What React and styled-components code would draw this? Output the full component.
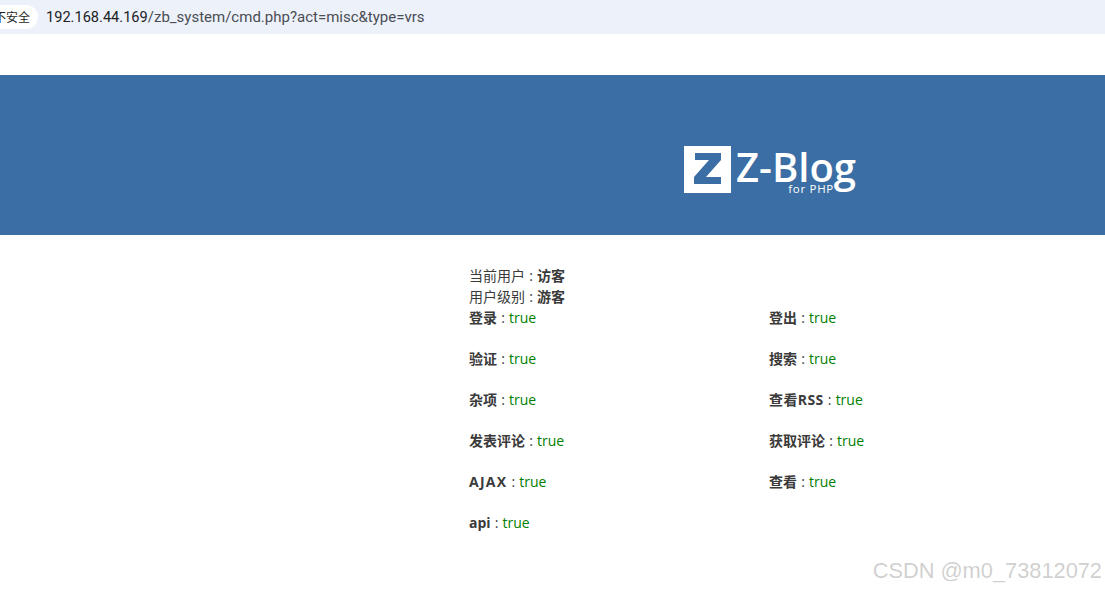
import React from 'react';
import styled, { createGlobalStyle } from 'styled-components';

const rights = [
  { name: '登录' },
  { name: '登出' },
  { name: '验证' },
  { name: '搜索' },
  { name: '杂项' },
  { name: '查看RSS', spacing: 0.4 },
  { name: '发表评论' },
  { name: '获取评论' },
  { name: 'AJAX', spacing: 1.25 },
  { name: '查看' },
  { name: 'api' },
];

const GlobalStyle = createGlobalStyle`
  html, body {
    margin: 0;
    padding: 0;
    background: #fff;
    overflow: hidden;
  }
  body {
    font-family: "Open Sans", "Noto Sans CJK SC", sans-serif;
    font-size: 14px;
    color: #3a3a3a;
  }
`;

const Page = styled.div`
  position: relative;
  width: 1105px;
  height: 591px;
  overflow: hidden;
`;

const AddressBar = styled.div`
  display: flex;
  align-items: center;
  height: 34px;
  background: #edf1fa;
  padding-bottom: 1px;
  box-sizing: border-box;
`;

const SecurityChip = styled.div`
  display: flex;
  align-items: center;
  justify-content: flex-end;
  width: 38px;
  height: 24px;
  padding-right: 8px;
  box-sizing: border-box;
  border-radius: 0 12px 12px 0;
  background: #fff;
  color: #1f1f1f;
  font-family: "Noto Sans CJK SC", sans-serif;
  font-size: 12px;
  white-space: nowrap;
  overflow: hidden;
`;

const Url = styled.div`
  margin-left: 8px;
  font-family: Roboto, "Liberation Sans", sans-serif;
  font-size: 15px;
  color: #4a4d52;
`;

const Host = styled.span`
  color: #202124;
  font-size: 14.6px;
`;

const Banner = styled.header`
  display: flex;
  height: 160px;
  margin-top: 41px;
  background: #3a6ea5;
`;

const Logo = styled.div`
  display: flex;
  align-items: flex-start;
  gap: 5px;
  margin: 71px 0 0 684px;
  height: 48px;
`;

const LogoText = styled.div`
  position: relative;
  margin-top: -3px;
  color: #fff;
  font-family: "Open Sans", sans-serif;
  font-weight: 600;
  font-size: 40px;
  line-height: 48px;
`;

const LogoSub = styled.span`
  position: absolute;
  right: 22px;
  bottom: -4px;
  font-size: 11.5px;
  line-height: 13px;
  font-weight: 400;
  letter-spacing: 0.7px;
  white-space: nowrap;
`;

const Content = styled.main`
  width: 600px;
  margin: 30px 0 0 469px;
  line-height: 21px;
  word-spacing: 0.5px;
`;

const InfoLine = styled.div`
  height: 21px;
`;

const Grid = styled.div`
  display: grid;
  grid-template-columns: 300px 300px;
  row-gap: 20px;
`;

const Cell = styled.div`
  height: 21px;
`;

const Name = styled.b`
  letter-spacing: ${(props) => props.$spacing || 0}px;
`;

const Value = styled.span`
  color: ${(props) => (props.$ok ? 'green' : 'red')};
`;

const Watermark = styled.div`
  position: absolute;
  right: 3px;
  top: 557px;
  font-family: "Liberation Sans", sans-serif;
  font-size: 21.8px;
  line-height: 28px;
  color: rgba(120, 120, 120, 0.36);
  white-space: nowrap;
`;

function LogoMark() {
  return (
    <svg width="47" height="47" viewBox="0 0 47 47" aria-hidden="true">
      <path fill="#fff" d="M0 0h47v47H0z" />
      <path
        fill="#3a6ea5"
        d="M11 7h26v7L22 31h15v7H10v-7l15-17H11z"
      />
    </svg>
  );
}

export default function App() {
  return (
    <Page>
      <GlobalStyle />
      <AddressBar>
        <SecurityChip>不安全</SecurityChip>
        <Url>
          <Host>192.168.44.169</Host>/zb_system/cmd.php?act=misc&amp;type=vrs
        </Url>
      </AddressBar>
      <Banner>
        <Logo>
          <LogoMark />
          <LogoText>
            Z-Blog
            <LogoSub>for PHP</LogoSub>
          </LogoText>
        </Logo>
      </Banner>
      <Content>
        <InfoLine>当前用户 : <b>访客</b></InfoLine>
        <InfoLine>用户级别 : <b>游客</b></InfoLine>
        <Grid>
          {rights.map((item) => (
            <Cell key={item.name}>
              <Name $spacing={item.spacing}>{item.name}</Name> : <Value $ok>true</Value>
            </Cell>
          ))}
        </Grid>
      </Content>
      <Watermark>CSDN @m0_73812072</Watermark>
    </Page>
  );
}
